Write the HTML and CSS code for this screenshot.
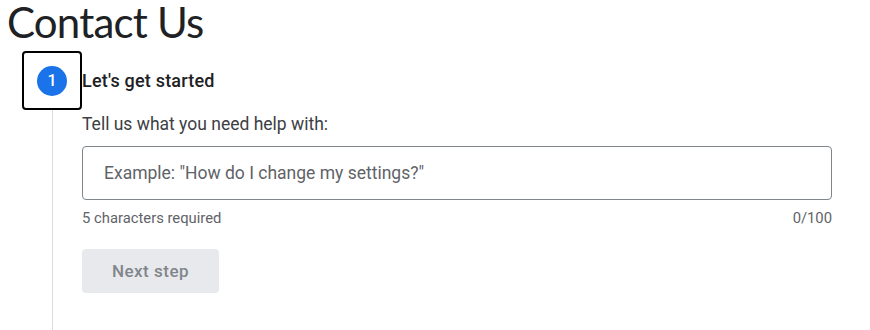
FILE: index.html
```html
<!DOCTYPE html>
<html lang="en">
<head>
<meta charset="utf-8">
<title>Contact Us</title>
<link rel="stylesheet" href="styles.css">
</head>
<body>
  <h1 class="title">Contact Us</h1>
  <div class="stepper">
    <div class="rail">
      <div class="step-focus">
        <span class="step-num">1</span>
      </div>
      <div class="rail-line"></div>
    </div>
    <div class="step-body">
      <div class="step-title">Let's get started</div>
      <label class="field-label" for="q">Tell us what you need help with:</label>
      <div class="field">
        <input id="q" class="field-input" type="text" placeholder="Example: &quot;How do I change my settings?&quot;">
      </div>
      <div class="helper">
        <span>5 characters required</span>
        <span>0/100</span>
      </div>
      <button class="next-btn" type="button" disabled>Next step</button>
    </div>
  </div>
</body>
</html>
```
FILE: styles.css
```css
* { box-sizing: border-box; }
html, body { margin: 0; padding: 0; background: #fff; }
body {
  font-family: Roboto, "Liberation Sans", Arial, sans-serif;
  color: #202124;
  height: 330px;
  overflow: hidden;
}
.title {
  margin: 0;
  padding: 0 0 0 7px;
  font-family: Lato, "Open Sans", Roboto, sans-serif;
  font-weight: 400;
  font-size: 42px;
  line-height: 44px;
  letter-spacing: -0.8px;
  color: #202124;
}
.stepper {
  display: flex;
  padding-left: 22px;
  margin-top: 7px;
}
.rail {
  width: 60px;
  display: flex;
  flex-direction: column;
  align-items: center;
}
.step-focus {
  width: 60px;
  height: 59px;
  border: 2px solid #000;
  border-radius: 4px;
  display: flex;
  align-items: center;
  justify-content: center;
}
.step-num {
  width: 30px;
  height: 30px;
  border-radius: 50%;
  background: #1a73e8;
  color: #fff;
  font-family: Roboto, sans-serif;
  font-weight: 500;
  font-size: 16px;
  display: flex;
  align-items: center;
  justify-content: center;
}
.rail-line {
  width: 1px;
  height: 220px;
  background: #dadce0;
  margin-left: 1px;
}
.step-body {
  flex: 1;
  max-width: 750px;
  display: flex;
  flex-direction: column;
  align-items: flex-start;
}
.step-title {
  height: 59px;
  display: flex;
  align-items: center;
  font-family: Roboto, sans-serif;
  font-weight: 500;
  font-size: 18px;
  letter-spacing: 0.2px;
  color: #202124;
  padding-bottom: 1px;
}
.field-label {
  margin-top: 2px;
  font-size: 17.5px;
  line-height: 24px;
  color: #3c4043;
}
.field {
  margin-top: 10px;
  width: 750px;
}
.field-input {
  display: block;
  width: 100%;
  height: 54px;
  border: 1px solid #80868b;
  border-radius: 4px;
  padding: 0 21px;
  font-family: Roboto, sans-serif;
  font-size: 17.5px;
  color: #202124;
  background: #fff;
  outline: none;
}
.field-input::placeholder { color: #5f6368; opacity: 1; }
.helper {
  width: 750px;
  display: flex;
  justify-content: space-between;
  margin-top: 9px;
  font-size: 14.8px;
  line-height: 18px;
  color: #5f6368;
}
.next-btn {
  margin-top: 22px;
  width: 137px;
  height: 44px;
  border: 0;
  border-radius: 4px;
  background: #e8e9ec;
  color: #80868b;
  font-family: Roboto, sans-serif;
  font-weight: 500;
  font-size: 17px;
  letter-spacing: 0.5px;
  padding: 0;
}
```
